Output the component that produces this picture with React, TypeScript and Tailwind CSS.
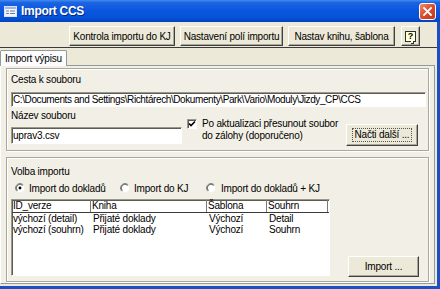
import React from 'react';

const Button = ({ children, className = '' }: { children: React.ReactNode; className?: string }) => (
  <div
    className={`flex items-center justify-center bg-[#ECE9D8] border border-t-white border-l-white border-r-[#404040] border-b-[#404040] shadow-[inset_-1px_-1px_0_#ACA899] ${className}`}
  >
    {children}
  </div>
);

const Radio = ({ checked = false }: { checked?: boolean }) => (
  <svg width="10" height="10" viewBox="0 0 12 12" className="shrink-0">
    <circle cx="6" cy="6" r="5.2" fill="white" />
    <path d="M9.9 2.1 A5.5 5.5 0 0 0 2.1 9.9" fill="none" stroke="#8A8A8A" strokeWidth="1" />
    <path d="M9.2 2.8 A4.5 4.5 0 0 0 2.8 9.2" fill="none" stroke="#303030" strokeWidth="1" />
    {checked && <circle cx="6" cy="6" r="1.7" fill="black" />}
  </svg>
);

const TitleIcon = () => (
  <svg width="13" height="11" viewBox="0 0 13 11">
    <rect x="0.5" y="0.5" width="12" height="10" fill="#F4F4F4" stroke="#D8E4F8" />
    <rect x="1" y="1" width="11" height="2" fill="#9FB8E8" />
    <rect x="2" y="4.5" width="3" height="1" fill="#6C7FA8" />
    <rect x="6" y="4.5" width="5" height="1" fill="#6C7FA8" />
    <rect x="2" y="7" width="3" height="1" fill="#6C7FA8" />
    <rect x="6" y="7" width="5" height="1" fill="#6C7FA8" />
  </svg>
);

const sunken =
  'bg-white border border-t-[#9A9889] border-l-[#9A9889] border-r-white border-b-white shadow-[inset_1px_1px_0_#5E5C52]';

const etched = 'border border-[#ACA899] shadow-[inset_1px_1px_0_white,1px_1px_0_white]';

export default function App() {
  return (
    <div className="w-[440px] h-[289px] overflow-hidden flex flex-col bg-[#ECE9D8] font-['Liberation_Sans',Arial,sans-serif] text-[10px] tracking-[-0.2px] text-black">
      {/* title bar */}
      <div className="h-[22px] shrink-0 flex items-center pl-[4px] pr-[4px] bg-[linear-gradient(to_bottom,#3E8DF3,#1E63E0_12%,#0A58E0_45%,#0651D6_80%,#0044BE)]">
        <TitleIcon />
        <span className="ml-[4px] text-white font-bold text-[12px] tracking-[-0.3px] [text-shadow:1px_1px_0_#0A2A80]">
          Import CCS
        </span>
        <div className="ml-auto w-[17px] h-[17px] rounded-[3px] border border-white bg-[linear-gradient(135deg,#F08A68,#D9472A_55%,#C23A1E)] flex items-center justify-center">
          <svg width="9" height="9" viewBox="0 0 9 9">
            <path d="M1 1 L8 8 M8 1 L1 8" stroke="white" strokeWidth="1.8" strokeLinecap="square" />
          </svg>
        </div>
      </div>

      {/* body inside window frame */}
      <div className="flex-1 flex flex-col border-r-[3px] border-b-[3px] border-[#1D4FC4]">
        {/* toolbar */}
        <div className="h-[25px] shrink-0 flex items-start pt-[4px] pl-[69px]">
          <Button className="w-[106px] h-[20px]">Kontrola importu do KJ</Button>
          <Button className="ml-[5px] w-[103px] h-[20px]">Nastavení polí importu</Button>
          <Button className="ml-[5px] w-[107px] h-[20px]">Nastav knihu, šablona</Button>
          <Button className="ml-[6px] w-[19px] h-[20px]">
            <div className="relative w-[11px] h-[11px] border border-[#2E2E2E] bg-[#FFFFD8] flex items-center justify-center text-[9px] font-bold leading-none tracking-normal">
              ?
              <div className="absolute -bottom-[3px] right-[1px] w-[3px] h-[3px] border-r border-b border-[#2E2E2E] bg-[#FFFFD8]" />
            </div>
          </Button>
        </div>
        <div className="h-px shrink-0 bg-[#3A3A3A]" />

        {/* tab strip */}
        <div className="h-[17px] shrink-0 flex items-end">
          <div className="relative z-10 -mb-px h-[16px] w-[67px] flex items-center pl-[4px] bg-[#FCFCFE] border border-b-0 border-[#919B9C] rounded-t-[2px]">
            Import výpisu
          </div>
        </div>

        {/* tab panel */}
        <div className="flex-1 mr-[2px] mb-[2px] border border-[#919B9C] border-l-white bg-[#F2F0E6] flex flex-col pl-[5px]">
          {/* group 1 */}
          <div className={`mt-[2px] w-[423px] h-[83px] shrink-0 ${etched} flex flex-col pl-[4px] pt-[5px]`}>
            <div className="leading-[12px] h-[12px]">Cesta k souboru</div>
            <div className={`mt-[6px] w-[415px] h-[15px] ${sunken} flex items-center pl-[1px] whitespace-nowrap overflow-hidden tracking-[-0.4px]`}>
              C:\Documents and Settings\Richtárech\Dokumenty\Park\Vario\Moduly\Jizdy_CP\CCS
            </div>
            <div className="flex items-start">
              <div className="flex flex-col">
                <div className="mt-[3px] leading-[12px] h-[12px]">Název souboru</div>
                <div className={`mt-[5px] w-[171px] h-[17px] ${sunken} flex items-center pl-[1px]`}>uprav3.csv</div>
              </div>
              <div className={`ml-[5px] mt-[12px] w-[10px] h-[10px] ${sunken} flex items-center justify-center`}>
                <svg width="8" height="8" viewBox="0 0 8 8">
                  <path d="M1 3.5 L3 5.5 L7 1.5" fill="none" stroke="black" strokeWidth="1.6" />
                </svg>
              </div>
              <div className="ml-[5px] mt-[11px] leading-[12px]">
                Po aktualizaci přesunout soubor
                <br />
                do zálohy (doporučeno)
              </div>
              <Button className="ml-auto mr-[10px] mt-[17px] w-[72px] h-[22px]">
                <span className="outline outline-1 outline-dotted outline-[#555] px-[2px] leading-[12px]">Načti další ...</span>
              </Button>
            </div>
          </div>

          {/* group 2 */}
          <div className={`mt-[6px] w-[423px] h-[125px] shrink-0 ${etched} flex flex-col pt-[8px]`}>
            <div className="pl-[4px] leading-[12px] h-[12px]">Volba importu</div>
            <div className="mt-[4px] h-[12px] flex items-center pl-[8px]">
              <div className="w-[105px] flex items-center gap-[4px]">
                <Radio checked />
                <span>Import do dokladů</span>
              </div>
              <div className="w-[86px] flex items-center gap-[4px]">
                <Radio />
                <span>Import do KJ</span>
              </div>
              <div className="flex items-center gap-[5px]">
                <Radio />
                <span>Import do dokladů + KJ</span>
              </div>
            </div>
            <div className="mt-[5px] flex items-start pl-[4px]">
              <div className={`w-[319px] h-[77px] ${sunken} flex flex-col`}>
                <div className="flex h-[13px] leading-[12px] border-b border-[#3A3A3A]">
                  <div className="w-[79px] pl-[1px] border-r border-[#7A7A7A]">ID_verze</div>
                  <div className="w-[116px] pl-[1px] border-r border-[#7A7A7A]">Kniha</div>
                  <div className="w-[60px] pl-[1px] border-r border-[#7A7A7A]">Šablona</div>
                  <div className="w-[61px] pl-[1px] border-r border-[#7A7A7A]">Souhrn</div>
                </div>
                <div className="flex h-[11px] leading-[11px]">
                  <div className="w-[79px] pl-[1px]">výchozí (detail)</div>
                  <div className="w-[116px] pl-[2px]">Přijaté doklady</div>
                  <div className="w-[60px] pl-[2px]">Výchozí</div>
                  <div className="w-[61px] pl-[2px]">Detail</div>
                </div>
                <div className="flex h-[11px] leading-[11px]">
                  <div className="w-[79px] pl-[1px]">výchozí (souhrn)</div>
                  <div className="w-[116px] pl-[2px]">Přijaté doklady</div>
                  <div className="w-[60px] pl-[2px]">Výchozí</div>
                  <div className="w-[61px] pl-[2px]">Souhrn</div>
                </div>
              </div>
              <Button className="ml-[18px] mt-[57px] w-[71px] h-[21px]">Import ...</Button>
            </div>
          </div>
        </div>
      </div>
    </div>
  );
}
